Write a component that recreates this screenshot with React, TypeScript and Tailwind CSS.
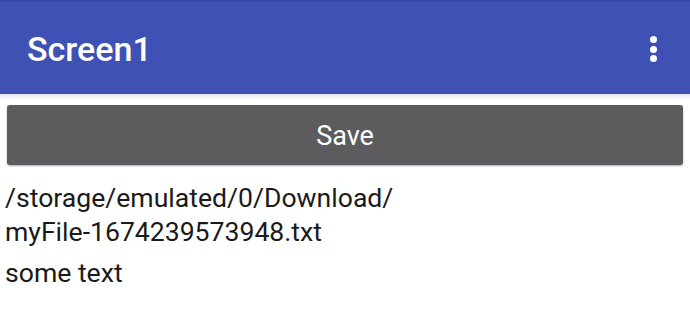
const App = () => {
  return (
    <div
      className="w-[690px] h-[322px] bg-white overflow-hidden"
      style={{ fontFamily: "Roboto, 'Liberation Sans', sans-serif" }}
    >
      <div className="h-[94px] bg-[#3f51b5] border-t-2 border-[#3949a6] flex items-center justify-between pl-[27px] pr-[33px]">
        <span className="text-white text-[34px] font-medium pt-[3px]">Screen1</span>
        <div className="flex flex-col gap-[2.5px] pt-[2px]">
          <span className="w-[7px] h-[7px] rounded-full bg-white" />
          <span className="w-[7px] h-[7px] rounded-full bg-white" />
          <span className="w-[7px] h-[7px] rounded-full bg-white" />
        </div>
      </div>
      <div className="h-[6px] bg-gradient-to-b from-[#e4e6f0] to-white" />
      <div className="px-[7px] pt-[5px]">
        <button className="w-full h-[60px] bg-[#5c5c5e] rounded-[3px] shadow-[0_1px_2px_rgba(0,0,0,0.35)] text-white text-[27px] pt-[2px]">
          Save
        </button>
      </div>
      <div className="px-[5px] pt-[16px] text-[26.6px] text-[#1a1a1a] leading-[34px]">
        <p>/storage/emulated/0/Download/</p>
        <p>myFile-1674239573948.txt</p>
        <p className="mt-[7px]">some text</p>
      </div>
    </div>
  );
};

export default App;
